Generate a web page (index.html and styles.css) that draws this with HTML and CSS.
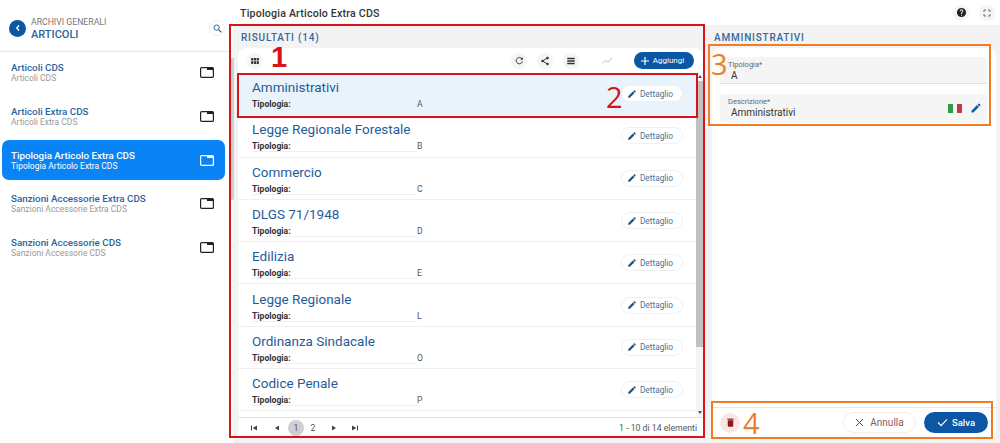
FILE: index.html
```html
<!DOCTYPE html>
<html lang="en">
<head>
    <meta charset="UTF-8">
    <title>Tipologia Articolo Extra CDS</title>
    <link rel="stylesheet" href="styles.css">
</head>
<body>
    <aside class="sidebar">
        <div class="side-head">
            <span class="back-btn"><svg width="8" height="8" viewBox="0 0 8 8"><path d="M5 1.5 2.8 4 5 6.500" fill="none" stroke="#fff" stroke-width="1.400"/></svg></span>
            <div class="side-title">
                <div class="side-over">ARCHIVI GENERALI</div>
                <div class="side-main">ARTICOLI</div>
            </div>
            <span class="search-btn"><svg width="9" height="9" viewBox="0 0 10 10"><circle cx="4" cy="4" r="2.900" fill="none" stroke="#33608f" stroke-width="1.100"/><path d="M6.200 6.200 9.200 9.200" stroke="#33608f" stroke-width="1.300"/></svg></span>
        </div>
        <nav class="side-list">
            <a class="side-item"><div class="side-text"><b>Articoli CDS</b><small>Articoli CDS</small></div><svg class="tab-icon" viewBox="0 0 14 11"><rect x=".6" y=".6" width="12.800" height="9.800" rx="1" fill="none" stroke="currentColor" stroke-width="1.200"/><rect x="7" y="1" width="6" height="2" fill="currentColor"/></svg></a>
            <a class="side-item"><div class="side-text"><b>Articoli Extra CDS</b><small>Articoli Extra CDS</small></div><svg class="tab-icon" viewBox="0 0 14 11"><rect x=".6" y=".6" width="12.800" height="9.800" rx="1" fill="none" stroke="currentColor" stroke-width="1.200"/><rect x="7" y="1" width="6" height="2" fill="currentColor"/></svg></a>
            <a class="side-item active"><div class="side-text"><b>Tipologia Articolo Extra CDS</b><small>Tipologia Articolo Extra CDS</small></div><svg class="tab-icon" viewBox="0 0 14 11"><rect x=".6" y=".6" width="12.800" height="9.800" rx="1" fill="none" stroke="currentColor" stroke-width="1.200"/><rect x="7" y="1" width="6" height="2" fill="currentColor"/></svg></a>
            <a class="side-item"><div class="side-text"><b>Sanzioni Accessorie Extra CDS</b><small>Sanzioni Accessorie Extra CDS</small></div><svg class="tab-icon" viewBox="0 0 14 11"><rect x=".6" y=".6" width="12.800" height="9.800" rx="1" fill="none" stroke="currentColor" stroke-width="1.200"/><rect x="7" y="1" width="6" height="2" fill="currentColor"/></svg></a>
            <a class="side-item"><div class="side-text"><b>Sanzioni Accessorie CDS</b><small>Sanzioni Accessorie CDS</small></div><svg class="tab-icon" viewBox="0 0 14 11"><rect x=".6" y=".6" width="12.800" height="9.800" rx="1" fill="none" stroke="currentColor" stroke-width="1.200"/><rect x="7" y="1" width="6" height="2" fill="currentColor"/></svg></a>
        </nav>
    </aside>
    <span class="side-thumb"></span>

    <main class="main">
        <header class="topbar">
            <h1>Tipologia Articolo Extra CDS</h1>
            <span class="round-btn"><svg width="11" height="11" viewBox="0 0 24 24"><path d="M12 2a10 10 0 1 0 0 20 10 10 0 0 0 0-20zm1 17h-2v-2h2v2zm2.100-7.700-.9.900c-.7.700-1.200 1.300-1.200 2.800h-2v-.5c0-1.100.5-2.100 1.200-2.800l1.200-1.300c.4-.3.600-.8.600-1.400a2 2 0 0 0-4 0H8a4 4 0 0 1 8 0c0 .9-.4 1.700-.9 2.300z" fill="#222"/></svg></span>
            <span class="round-btn"><svg width="8" height="8" viewBox="0 0 24 24"><path d="M3 9V3h6M15 3h6v6M21 15v6h-6M9 21H3v-6" fill="none" stroke="#555" stroke-width="2.500"/></svg></span>
        </header>
        <div class="content">
            <section class="results">
                <h2 class="section-title">RISULTATI (14)</h2>
                <div class="toolbar">
                    <span class="tool-btn first"><svg width="8" height="6" viewBox="0 0 9 7"><path d="M0 0h2.500v3H0zM3.200 0h2.600v3H3.200zM6.500 0H9v3H6.500zM0 3.800h2.500V7H0zM3.200 3.800h2.600V7H3.200zM6.500 3.800H9V7H6.500z" fill="#333"/></svg></span>
                    <span class="tool-spacer"></span>
                    <span class="tool-btn"><svg width="9" height="9" viewBox="0 0 24 24"><path d="M19 8a8.500 8.500 0 1 0 1 6" fill="none" stroke="#333" stroke-width="2.500"/><path d="M21 3v7h-7z" fill="#333"/></svg></span>
                    <span class="tool-btn"><svg width="10" height="10" viewBox="0 0 24 24"><path d="M18 16c-.8 0-1.500.3-2 .8l-7.100-4.200a3 3 0 0 0 0-1.200L16 7.200A3 3 0 1 0 15 5l.1.600-7.100 4.200a3 3 0 1 0 0 4.400l7.100 4.200v.600a3 3 0 1 0 3-3z" fill="#333"/></svg></span>
                    <span class="tool-btn"><svg width="10" height="10" viewBox="0 0 24 24"><path d="M3 4h18v4H3zM3 10h18v4H3zM3 16h18v4H3z" fill="#333"/></svg></span>
                    <span class="tool-btn ghost"><svg width="11" height="9" viewBox="0 0 24 18"><path d="M1 15 8 8l5 5 9-10" fill="none" stroke="#bbb" stroke-width="2"/></svg></span>
                    <span class="add-btn"><svg width="8" height="8" viewBox="0 0 10 10"><path d="M5 0v10M0 5h10" stroke="#fff" stroke-width="1.500"/></svg>Aggiungi</span>
                </div>
                <div class="list-wrap">
                    <div class="rows" id="rows">
                        <div class="row selected"><div class="row-text"><div class="row-title">Amministrativi</div><div class="row-meta"><b>Tipologia:</b><span>A</span></div></div><span class="detail-btn"><svg width="10" height="10" viewBox="0 0 24 24"><path d="M3 17.250V21h3.750L17.800 9.940l-3.750-3.750L3 17.250zM20.700 7.040a1 1 0 0 0 0-1.410l-2.340-2.340a1 1 0 0 0-1.410 0l-1.830 1.830 3.750 3.750 1.830-1.830z" fill="#264f7c"/></svg>Dettaglio</span></div>
                        <div class="row"><div class="row-text"><div class="row-title">Legge Regionale Forestale</div><div class="row-meta"><b>Tipologia:</b><span>B</span></div></div><span class="detail-btn"><svg width="10" height="10" viewBox="0 0 24 24"><path d="M3 17.250V21h3.750L17.800 9.940l-3.750-3.750L3 17.250zM20.700 7.040a1 1 0 0 0 0-1.410l-2.340-2.340a1 1 0 0 0-1.410 0l-1.830 1.830 3.750 3.750 1.830-1.830z" fill="#264f7c"/></svg>Dettaglio</span></div>
                        <div class="row"><div class="row-text"><div class="row-title">Commercio</div><div class="row-meta"><b>Tipologia:</b><span>C</span></div></div><span class="detail-btn"><svg width="10" height="10" viewBox="0 0 24 24"><path d="M3 17.250V21h3.750L17.800 9.940l-3.750-3.750L3 17.250zM20.700 7.040a1 1 0 0 0 0-1.410l-2.340-2.340a1 1 0 0 0-1.410 0l-1.830 1.830 3.750 3.750 1.830-1.830z" fill="#264f7c"/></svg>Dettaglio</span></div>
                        <div class="row"><div class="row-text"><div class="row-title">DLGS 71/1948</div><div class="row-meta"><b>Tipologia:</b><span>D</span></div></div><span class="detail-btn"><svg width="10" height="10" viewBox="0 0 24 24"><path d="M3 17.250V21h3.750L17.800 9.940l-3.750-3.750L3 17.250zM20.700 7.040a1 1 0 0 0 0-1.410l-2.340-2.340a1 1 0 0 0-1.410 0l-1.830 1.830 3.750 3.750 1.830-1.830z" fill="#264f7c"/></svg>Dettaglio</span></div>
                        <div class="row"><div class="row-text"><div class="row-title">Edilizia</div><div class="row-meta"><b>Tipologia:</b><span>E</span></div></div><span class="detail-btn"><svg width="10" height="10" viewBox="0 0 24 24"><path d="M3 17.250V21h3.750L17.800 9.940l-3.750-3.750L3 17.250zM20.700 7.040a1 1 0 0 0 0-1.410l-2.340-2.340a1 1 0 0 0-1.410 0l-1.830 1.830 3.750 3.750 1.830-1.830z" fill="#264f7c"/></svg>Dettaglio</span></div>
                        <div class="row"><div class="row-text"><div class="row-title">Legge Regionale</div><div class="row-meta"><b>Tipologia:</b><span>L</span></div></div><span class="detail-btn"><svg width="10" height="10" viewBox="0 0 24 24"><path d="M3 17.250V21h3.750L17.800 9.940l-3.750-3.750L3 17.250zM20.700 7.040a1 1 0 0 0 0-1.410l-2.340-2.340a1 1 0 0 0-1.410 0l-1.830 1.830 3.750 3.750 1.830-1.830z" fill="#264f7c"/></svg>Dettaglio</span></div>
                        <div class="row"><div class="row-text"><div class="row-title">Ordinanza Sindacale</div><div class="row-meta"><b>Tipologia:</b><span>O</span></div></div><span class="detail-btn"><svg width="10" height="10" viewBox="0 0 24 24"><path d="M3 17.250V21h3.750L17.800 9.940l-3.750-3.750L3 17.250zM20.700 7.040a1 1 0 0 0 0-1.410l-2.340-2.340a1 1 0 0 0-1.410 0l-1.830 1.830 3.750 3.750 1.830-1.830z" fill="#264f7c"/></svg>Dettaglio</span></div>
                        <div class="row"><div class="row-text"><div class="row-title">Codice Penale</div><div class="row-meta"><b>Tipologia:</b><span>P</span></div></div><span class="detail-btn"><svg width="10" height="10" viewBox="0 0 24 24"><path d="M3 17.250V21h3.750L17.800 9.940l-3.750-3.750L3 17.250zM20.700 7.040a1 1 0 0 0 0-1.410l-2.340-2.340a1 1 0 0 0-1.410 0l-1.830 1.830 3.750 3.750 1.830-1.830z" fill="#264f7c"/></svg>Dettaglio</span></div>
                    </div>
                    <div class="scrollbar"><span class="arrow-up"></span><span class="thumb"></span><span class="arrow-down"></span></div>
                </div>
                <div class="pager">
                    <svg class="page-icon first-page" width="6" height="6" viewBox="0 0 7 7"><path d="M0 .5h1.200v6H0zM7 .5v6L2 3.500z" fill="#444"/></svg>
                    <svg class="page-icon prev-page" width="4" height="6" viewBox="0 0 5 7"><path d="M5 .5v6L0 3.500z" fill="#444"/></svg>
                    <span class="page-num current">1</span>
                    <span class="page-num">2</span>
                    <svg class="page-icon next-page" width="4" height="6" viewBox="0 0 5 7"><path d="M0 .5v6l5-3z" fill="#444"/></svg>
                    <svg class="page-icon last-page" width="6" height="6" viewBox="0 0 7 7"><path d="M0 .5v6l5-3zM5.800 .5H7v6H5.800z" fill="#444"/></svg>
                    <span class="page-info">1 - 10 di 14 elementi</span>
                </div>
            </section>

            <section class="detail">
                <h2 class="section-title">AMMINISTRATIVI</h2>
                <div class="detail-card">
                    <div class="fields">
                        <div class="field plain"><label>Tipologia*</label><div class="field-value">A</div></div>
                        <div class="field boxed">
                            <div><label>Descrizione*</label><div class="field-value">Amministrativi</div></div>
                            <span class="flag"><i class="green"></i><i class="white"></i><i class="red"></i></span>
                            <svg width="12" height="12" viewBox="0 0 24 24"><path d="M3 17.250V21h3.750L17.800 9.940l-3.750-3.750L3 17.250zM20.700 7.040a1 1 0 0 0 0-1.410l-2.340-2.340a1 1 0 0 0-1.410 0l-1.830 1.830 3.750 3.750 1.830-1.830z" fill="#0b5ca8"/></svg>
                        </div>
                    </div>
                    <div class="actions">
                        <span class="trash-btn"><svg width="11" height="11" viewBox="0 0 24 24"><path d="M6 19a2 2 0 0 0 2 2h8a2 2 0 0 0 2-2V7H6v12zM19 4h-3.500l-1-1h-5l-1 1H5v2h14V4z" fill="#8b1a1a"/></svg></span>
                        <span class="action-spacer"></span>
                        <span class="cancel-btn"><svg width="9" height="9" viewBox="0 0 10 10"><path d="M1 1l8 8M9 1l-8 8" stroke="#8b3a3a" stroke-width="1.100"/></svg>Annulla</span>
                        <span class="save-btn"><svg width="11" height="9" viewBox="0 0 12 10"><path d="M1 5l3.500 3.500L11 1.500" fill="none" stroke="#fff" stroke-width="1.300"/></svg>Salva</span>
                    </div>
                </div>
            </section>
        </div>
    </main>

    <div class="mark red-mark mark-list"></div>
    <div class="mark red-mark mark-row"></div>
    <div class="mark orange-mark mark-fields"></div>
    <div class="mark orange-mark mark-actions"></div>
    <span class="num num-1">1</span>
    <span class="num num-2">2</span>
    <span class="num num-3">3</span>
    <span class="num num-4">4</span>
</body>
</html>
```

FILE: styles.css
```css
* {
    box-sizing: border-box;
}
html, body {
    height: 443px;
    overflow: hidden;
}
body {
    margin: 0;
    display: flex;
    font-family: Roboto, "Liberation Sans", sans-serif;
    background-color: #fff;
    color: #333;
}

/* sidebar */
.sidebar {
    width: 233px;
    flex-shrink: 0;
    background: #fff;
}
.side-head {
    height: 52px;
    padding: 5px 7px 0 9px;
    display: flex;
    align-items: center;
    border-bottom: 1px solid #e4e6e8;
}
.back-btn {
    width: 17px;
    height: 17px;
    border-radius: 50%;
    background: #0b57a4;
    display: flex;
    align-items: center;
    justify-content: center;
}
.side-title {
    flex: 1;
    margin-left: 5px;
}
.side-over {
    font-size: 8.700px;
    color: #777;
    line-height: 11px;
    margin-top: 1px;
}
.side-main {
    font-size: 11px;
    font-weight: 500;
    color: #2a649e;
    line-height: 13px;
}
.search-btn {
    width: 16px;
    height: 16px;
    border-radius: 50%;
    border: 1px solid #eef0f2;
    display: flex;
    align-items: center;
    justify-content: center;
    margin-right: 1px;
}
.side-list {
    padding: 0 2px;
    margin-top: -1px;
}
.side-item {
    height: 43.700px;
    display: flex;
    align-items: center;
    padding: 0 11px 0 9px;
    color: #222;
    border-radius: 7px;
    margin-right: 6px;
}
.side-item.active {
    height: 40px;
    margin: 2px 6px 1.700px 0;
    background: #0a84f5;
    color: #fff;
}
.side-text {
    flex: 1;
}
.side-text b {
    display: block;
    font-size: 9.800px;
    font-weight: 500;
    color: #2a649e;
    line-height: 11px;
}
.side-text small {
    display: block;
    font-size: 8.500px;
    color: #999;
    line-height: 10px;
}
.active .side-text b,
.active .side-text small {
    color: #fff;
}
.tab-icon {
    width: 14px;
    height: 11px;
}
.side-thumb {
    position: absolute;
    left: 231px;
    top: 58px;
    width: 3px;
    height: 142px;
    background: #d0d0d0;
}

/* top bar */
.main {
    flex: 1;
    min-width: 0;
    display: flex;
    flex-direction: column;
}
.topbar {
    height: 25px;
    padding: 0 5px 0 7px;
    display: flex;
    align-items: center;
    gap: 10px;
    background: #fff;
}
h1 {
    flex: 1;
    margin: 0;
    padding-top: 2px;
    font-size: 10.600px;
    font-weight: 500;
    color: #333;
    letter-spacing: .2px;
}
.round-btn {
    width: 16px;
    height: 16px;
    border-radius: 50%;
    background: #f5f5f5;
    display: flex;
    align-items: center;
    justify-content: center;
}
.content {
    flex: 1;
    min-height: 0;
    display: flex;
    background: #f3f3f3;
    padding: 0 4px 6px 5px;
}
.section-title {
    margin: 0;
    height: 23px;
    line-height: 26px;
    font-size: 10px;
    font-weight: 500;
    letter-spacing: .8px;
    color: #33689f;
}

/* results */
.results {
    width: 465px;
    display: flex;
    flex-direction: column;
}
.results .section-title {
    padding-left: 3px;
}
.toolbar {
    height: 25px;
    background: #fff;
    border-radius: 8px 8px 0 0;
    display: flex;
    align-items: center;
    gap: 10px;
    padding: 0 9px 0 9px;
}
.tool-btn {
    width: 16px;
    height: 16px;
    border-radius: 50%;
    background: #f5f5f5;
    display: flex;
    align-items: center;
    justify-content: center;
}
.tool-btn.ghost {
    background: #fff;
    margin: 0 9px 0 10px;
}
.tool-spacer {
    flex: 1;
}
.add-btn {
    width: 60px;
    height: 17px;
    border-radius: 9px;
    background: #0b57a4;
    color: #fff;
    font-size: 8px;
    display: flex;
    align-items: center;
    justify-content: center;
    gap: 4px;
    padding-right: 3px;
}
.list-wrap {
    flex: 1;
    min-height: 0;
    display: flex;
    background: #fff;
}
.rows {
    flex: 1;
    min-width: 0;
    overflow: hidden;
}
.row {
    height: 42.300px;
    display: flex;
    align-items: center;
    padding: 0 13px 0 14px;
    border-bottom: 1px solid #efefef;
}
.row.selected {
    background: #e8f3fc;
}
.row-text {
    flex: 1;
    padding-top: 2px;
}
.row-title {
    font-size: 13.500px;
    color: #1f5c9a;
    line-height: 16px;
}
.row-meta {
    display: flex;
    font-size: 8.600px;
    line-height: 10px;
    margin-top: 4px;
    color: #555;
}
.row-meta b {
    width: 165px;
    color: #333;
    font-weight: 700;
    border-bottom: 1px solid #f0f0f0;
}
.detail-btn {
    width: 62px;
    height: 17px;
    border-radius: 9px;
    background: #fff;
    border: 1px solid #eef0f3;
    font-size: 8.300px;
    color: #48729c;
    display: flex;
    align-items: center;
    justify-content: center;
    gap: 3px;
    padding-right: 4px;
}
.scrollbar {
    width: 7px;
    background: #f4f4f4;
    display: flex;
    flex-direction: column;
    align-items: center;
}
.arrow-up {
    margin-top: 2px;
    border: 2px solid transparent;
    border-bottom: 3px solid #555;
    border-top: 0;
}
.arrow-down {
    margin-top: auto;
    margin-bottom: 3px;
    border: 2px solid transparent;
    border-top: 3px solid #555;
    border-bottom: 0;
}
.thumb {
    display: block;
    width: 100%;
    height: 266px;
    margin-top: 3px;
    background: #c1c1c1;
}
.pager {
    height: 20px;
    background: #fff;
    border-top: 1px solid #e4e4e4;
    display: flex;
    align-items: center;
    padding: 0 6px 0 13px;
    font-size: 8.700px;
    color: #555;
}
.prev-page {
    margin-left: 18px;
}
.page-num {
    width: 16px;
    height: 16px;
    line-height: 16px;
    border-radius: 50%;
    text-align: center;
}
.page-num.current {
    margin-left: 9px;
    background: #d0d0d0;
}
.page-num + .page-num {
    margin-left: 1px;
}
.next-page {
    margin-left: 11px;
}
.last-page {
    margin-left: 16px;
}
.page-info {
    margin-left: auto;
}

/* detail */
.detail {
    flex: 1;
    min-width: 0;
    display: flex;
    flex-direction: column;
}
.detail .section-title {
    padding-left: 11px;
}
.detail-card {
    flex: 1;
    display: flex;
    flex-direction: column;
    margin-left: 9px;
    background: #fff;
    border-radius: 8px 8px 0 0;
}
.fields {
    flex: 1;
    padding: 9px 9px 0 8px;
}
.field label {
    display: block;
    font-size: 7.500px;
    line-height: 9px;
    color: #666;
}
.field-value {
    font-size: 10px;
    line-height: 12px;
    color: #333;
    padding-left: 3px;
    margin-top: 1px;
}
.field {
    background: #f5f5f5;
    padding: 5px 8px;
    border-radius: 4px 4px 0 0;
}
.field.plain {
    height: 27px;
    padding-top: 3px;
    border-bottom: 1px solid #dde0e2;
}
.field.boxed {
    height: 29px;
    margin-top: 10px;
    border-radius: 4px;
    display: flex;
    align-items: center;
    padding: 0 5px 2px 8px;
}
.field.boxed > div {
    flex: 1;
}
.flag {
    display: flex;
    height: 9px;
    margin: 2px 8px 0 0;
}
.flag i {
    width: 4.700px;
}
.flag .green {
    background: #2e9a4a;
}
.flag .white {
    background: #f4f4f4;
}
.flag .red {
    background: #c8373b;
}
.actions {
    height: 30px;
    display: flex;
    align-items: center;
    border-top: 1px solid #e3e8ec;
    padding: 0 8px 0 8px;
    gap: 8px;
}
.action-spacer {
    flex: 1;
}
.trash-btn {
    width: 20px;
    height: 20px;
    border-radius: 50%;
    background: #f8e6e6;
    display: flex;
    align-items: center;
    justify-content: center;
}
.cancel-btn {
    width: 73px;
    height: 21px;
    border-radius: 11px;
    border: 1px solid #f5e9e9;
    font-size: 10px;
    color: #8b5a5a;
    display: flex;
    align-items: center;
    justify-content: center;
    gap: 6px;
}
.save-btn {
    width: 64px;
    height: 21px;
    border-radius: 11px;
    background: #0b57a4;
    color: #fff;
    font-size: 9.500px;
    font-weight: 500;
    display: flex;
    align-items: center;
    justify-content: center;
    gap: 4px;
}

/* annotations drawn over the screenshot */
.mark {
    position: absolute;
    border: 2px solid #d8131b;
    pointer-events: none;
}
.orange-mark {
    border-color: #ef7d28;
}
.mark-list {
    left: 229px;
    top: 24px;
    width: 476px;
    height: 414px;
}
.mark-row {
    left: 237px;
    top: 73px;
    width: 461px;
    height: 45px;
}
.mark-fields {
    left: 708px;
    top: 44px;
    width: 283px;
    height: 82px;
}
.mark-actions {
    left: 711px;
    top: 401px;
    width: 282px;
    height: 38px;
}
.num {
    position: absolute;
    font-family: "Open Sans", sans-serif;
    font-size: 29px;
    line-height: 22px;
}
.num-1 {
    left: 271px;
    top: 46px;
    font-family: "Liberation Sans", sans-serif;
    font-weight: 700;
    color: #d8131b;
}
.num-2 {
    left: 606px;
    top: 86px;
    color: #d8131b;
}
.num-3 {
    left: 711px;
    top: 53px;
    color: #ef7d28;
}
.num-4 {
    left: 743px;
    top: 412px;
    color: #ef7d28;
}
```
